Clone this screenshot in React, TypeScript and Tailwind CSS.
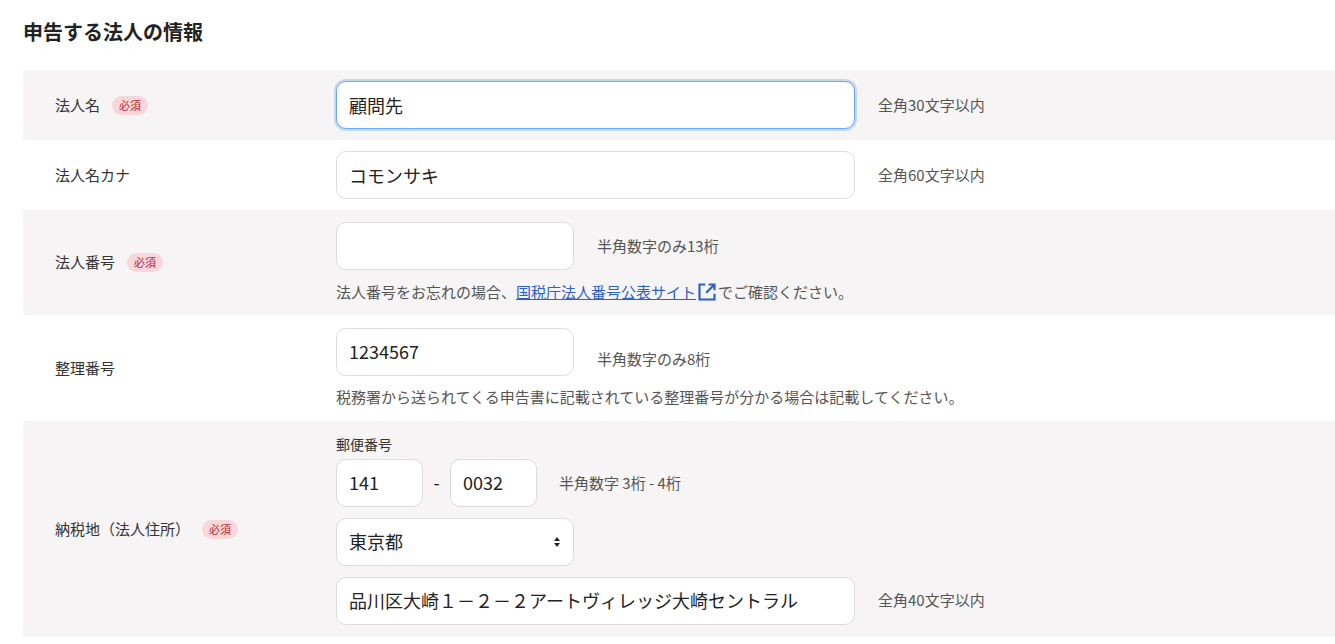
import React from "react";

const F = { fontFamily: '"Noto Sans CJK JP", "Noto Sans", sans-serif' };

function Badge() {
  return <span className="ml-3 inline-flex items-center rounded-full bg-[#f7d7db] px-[7px] h-[19px] text-[11px] text-[#b3263a]">必須</span>;
}

function Input({ value, w = "w-[519px]", focus = false }: { value: string; w?: string; focus?: boolean }) {
  return (
    <div className={`${w} h-[48px] shrink-0 rounded-[10px] bg-white flex items-center px-[12px] text-[18px] text-[#222] ${focus ? "border border-[#6aaaf0] shadow-[0_0_0_2px_rgba(100,165,240,0.35)]" : "border border-[#dcdcdc]"}`}>
      {value}
    </div>
  );
}

function Hint({ children }: { children: React.ReactNode }) {
  return <span className="text-[15px] text-[#555]">{children}</span>;
}

function Row({ grey, label, req, children, h }: { grey?: boolean; label: string; req?: boolean; children: React.ReactNode; h: string }) {
  return (
    <div className={`flex ${h} ${grey ? "bg-[#f6f4f4]" : "bg-white"}`}>
      <div className="w-[313px] shrink-0 flex items-center pl-[32px] text-[15px] text-[#333]">
        {label}
        {req && <Badge />}
      </div>
      <div className="flex flex-col justify-center">{children}</div>
    </div>
  );
}

export default function App() {
  return (
    <div style={F} className="bg-white w-[1335px] h-[644px] overflow-hidden">
      <h2 className="pl-[23px] pt-[17px] h-[70px] text-[20px] font-bold text-[#222]">申告する法人の情報</h2>
      <div className="ml-[23px]">
        <Row grey label="法人名" req h="h-[70px]">
          <div className="flex items-center gap-[23px]"><Input value="顧問先" focus /><Hint>全角30文字以内</Hint></div>
        </Row>
        <Row label="法人名カナ" h="h-[70px]">
          <div className="flex items-center gap-[23px]"><Input value="コモンサキ" /><Hint>全角60文字以内</Hint></div>
        </Row>
        <Row grey label="法人番号" req h="h-[105px]">
          <div className="flex items-center gap-[23px]"><Input value="" w="w-[238px]" /><Hint>半角数字のみ13桁</Hint></div>
          <div className="mt-[11px] text-[15px] text-[#555] flex items-center">
            法人番号をお忘れの場合、
            <span className="text-[#2f5fc8] underline">国税庁法人番号公表サイト</span>
            <svg width="20" height="20" viewBox="0 0 24 24" className="mx-[1px]" fill="none" stroke="#2f5fc8" strokeWidth="2.6">
              <path d="M10 3H3v18h18v-7" />
              <path d="M14 3h7v7M21 3L11 13" />
            </svg>
            でご確認ください。
          </div>
        </Row>
        <Row label="整理番号" h="h-[106px]">
          <div className="flex items-center gap-[23px]"><Input value="1234567" w="w-[238px]" /><span className="mt-[12px]"><Hint>半角数字のみ8桁</Hint></span></div>
          <div className="mt-[10px] text-[15px] text-[#555]">税務署から送られてくる申告書に記載されている整理番号が分かる場合は記載してください。</div>
        </Row>
        <Row grey label="納税地（法人住所）" req h="h-[216px]">
          <div className="text-[14px] text-[#333] mb-[4px]">郵便番号</div>
          <div className="flex items-center">
            <Input value="141" w="w-[87px]" />
            <span className="w-[27px] text-center text-[18px] text-[#222]">-</span>
            <Input value="0032" w="w-[87px]" />
            <span className="ml-[22px]"><Hint>半角数字 3桁 - 4桁</Hint></span>
          </div>
          <div className="mt-[11px] w-[238px] h-[48px] rounded-[10px] border border-[#dcdcdc] bg-white flex items-center justify-between px-[12px] text-[18px] text-[#222]">
            東京都
            <svg width="8" height="12" viewBox="0 0 8 12"><path d="M4 1L7 5H1z M4 11L1 7h6z" fill="#222" /></svg>
          </div>
          <div className="mt-[11px] flex items-center gap-[23px]"><Input value="品川区大崎１－２－２アートヴィレッジ大崎セントラル" /><Hint>全角40文字以内</Hint></div>
        </Row>
      </div>
    </div>
  );
}
